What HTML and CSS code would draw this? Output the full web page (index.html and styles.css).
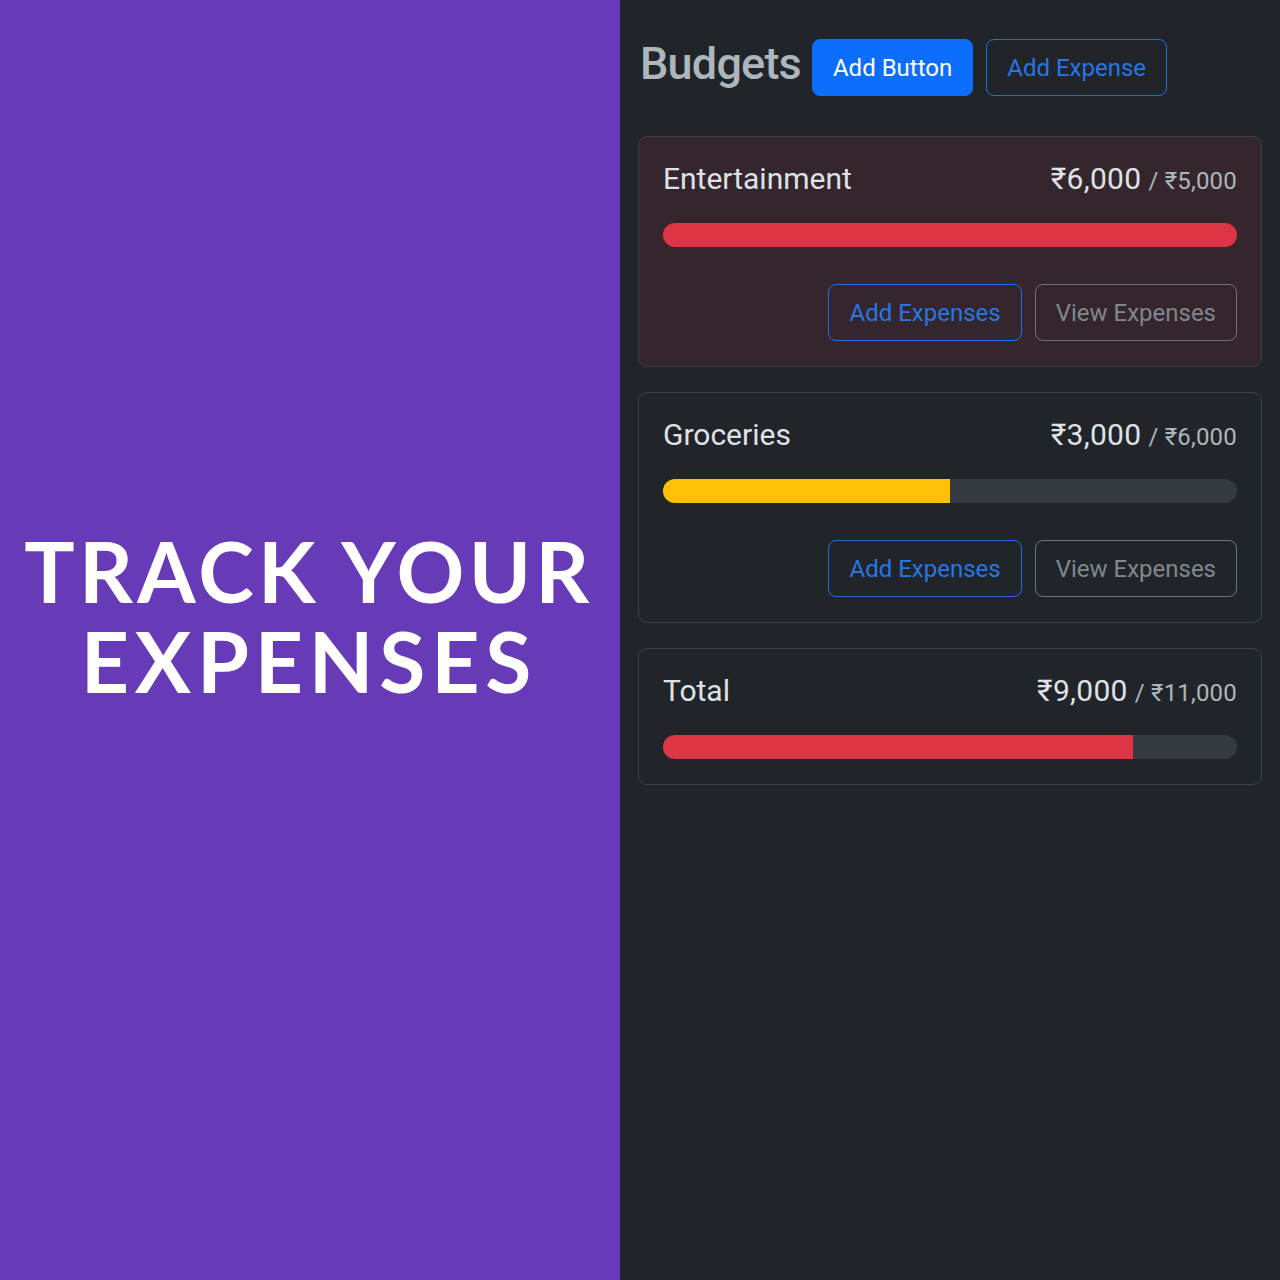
FILE: index.html
```html
<!DOCTYPE html>
<html lang="en">
<head>
<meta charset="utf-8">
<title>Budgets</title>
<link rel="stylesheet" href="styles.css">
</head>
<body>
<div class="page">
  <section class="hero">
    <h1 class="hero-title"><span class="hero-line">TRACK YOUR</span><span class="hero-line hero-line-wide">EXPENSES</span></h1>
  </section>
  <main class="app">
    <header class="app-header">
      <h2 class="app-title">Budgets</h2>
      <button class="btn btn-primary">Add Button</button>
      <button class="btn btn-outline-primary">Add Expense</button>
    </header>
    <div class="cards">
      <div class="card card-over">
        <div class="card-title">
          <span class="name">Entertainment</span>
          <span class="amount">₹6,000<span class="max">/ ₹5,000</span></span>
        </div>
        <div class="progress"><div class="bar bar-danger" style="width:100%"></div></div>
        <div class="actions">
          <button class="btn btn-outline-primary">Add Expenses</button>
          <button class="btn btn-outline-secondary">View Expenses</button>
        </div>
      </div>
      <div class="card">
        <div class="card-title">
          <span class="name">Groceries</span>
          <span class="amount">₹3,000<span class="max">/ ₹6,000</span></span>
        </div>
        <div class="progress"><div class="bar bar-warning" style="width:50%"></div></div>
        <div class="actions">
          <button class="btn btn-outline-primary">Add Expenses</button>
          <button class="btn btn-outline-secondary">View Expenses</button>
        </div>
      </div>
      <div class="card">
        <div class="card-title">
          <span class="name">Total</span>
          <span class="amount">₹9,000<span class="max">/ ₹11,000</span></span>
        </div>
        <div class="progress"><div class="bar bar-danger" style="width:81.82%"></div></div>
      </div>
    </div>
  </main>
</div>
</body>
</html>
```

FILE: styles.css
```css
html, body {
  margin: 0;
  padding: 0;
}
body {
  font-family: Roboto, "Noto Sans", "DejaVu Sans", sans-serif;
  background: #212529;
}
.page {
  display: flex;
  width: 1280px;
  height: 1280px;
}
.hero {
  width: 620px;
  flex: none;
  background: #673ab7;
  display: flex;
  align-items: center;
  justify-content: center;
  padding-bottom: 48px;
  box-sizing: border-box;
}
.hero-title {
  margin: 0;
  color: #ffffff;
  font-family: Lato, "Noto Sans", sans-serif;
  font-weight: 700;
  font-size: 84px;
  letter-spacing: 4.3px;
  text-align: center;
  padding-right: 2px;
  display: flex;
  flex-direction: column;
  align-items: center;
}
.hero-line {
  display: block;
  height: 90px;
  line-height: 90px;
  white-space: nowrap;
}
.hero-line-wide {
  letter-spacing: 5.8px;
}
.app {
  flex: 1;
  background: #212529;
  padding: 39px 18px 0 18px;
  box-sizing: border-box;
}
.app-header {
  display: flex;
  align-items: center;
  gap: 13px;
  margin-bottom: 40px;
}
.app-title {
  margin: 0 -2px 0 2px;
  font-size: 45px;
  font-weight: 500;
  letter-spacing: -0.8px;
  color: #adb5bd;
  line-height: 50px;
  position: relative;
  top: -4px;
}
.btn {
  font-family: Roboto, "Noto Sans", "DejaVu Sans", sans-serif;
  font-size: 24px;
  line-height: 36px;
  padding: 9px 20px;
  border-radius: 8px;
  background: transparent;
  border: 1.5px solid transparent;
  box-sizing: border-box;
  height: 57px;
  cursor: pointer;
}
.btn-primary {
  background: #0d6efd;
  border-color: #0d6efd;
  color: #ffffff;
}
.btn-outline-primary {
  border-color: #1f6fe0;
  color: #2676e6;
}
.btn-outline-secondary {
  border-color: #6c757d;
  color: #80878e;
}
.cards {
  display: flex;
  flex-direction: column;
  gap: 25px;
}
.card {
  border: 1.5px solid #3d4246;
  border-radius: 9px;
  padding: 24px 24px 25px 24px;
  background: #212529;
}
.card-over {
  background: #34262c;
}
.card-title {
  display: flex;
  justify-content: space-between;
  align-items: baseline;
  color: #dee2e6;
  line-height: 36px;
  margin-bottom: 24px;
}
.name {
  font-size: 30px;
}
.amount {
  font-size: 30px;
  letter-spacing: 0.3px;
}
.max {
  font-size: 24px;
  color: #adb5bd;
  margin-left: 7px;
  letter-spacing: 0.2px;
}
.progress {
  height: 24px;
  border-radius: 12px;
  background: #343a40;
  overflow: hidden;
}
.bar {
  height: 100%;
}
.bar-danger { background: #dc3545; }
.bar-warning { background: #ffc107; }
.actions {
  display: flex;
  justify-content: flex-end;
  gap: 13px;
  margin-top: 37px;
}
```
